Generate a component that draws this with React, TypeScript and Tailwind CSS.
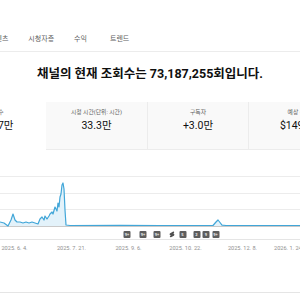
import React from 'react';

const tabs = [
    { t: '콘텐츠', ml: '-ml-[11px]' },
    { t: '시청자층', ml: 'ml-[20px]' },
    { t: '수익', ml: 'ml-[20px]' },
    { t: '트렌드', ml: 'ml-[23px]' },
];

const cards = [
    { label: '조회수', value: '158.7만', active: true },
    { label: '시청 시간(단위: 시간)', value: '33.3만' },
    { label: '구독자', value: '+3.0만' },
    { label: '예상 수익', value: '$149.52' },
];

// chart points in px (x, y) inside the 300x89 chart box
const points: [number, number][] = [
    [0, 72], [4, 73], [8, 76], [11, 70], [13, 64], [15, 70], [17, 72], [20, 72],
    [23, 73], [26, 72], [29, 73], [32, 72], [35, 73], [38, 74], [40, 69], [42, 67],
    [44, 70], [45, 66], [47, 69], [49, 66], [50, 64], [52, 62], [53, 64], [55, 57],
    [57, 61], [58, 53], [59, 57], [60, 47], [61, 44], [62, 35], [63, 33], [64, 39],
    [65, 60], [66, 75], [70, 75.5], [120, 75.3], [160, 75.5], [213, 75.5], [216, 72],
    [218, 70], [220, 72.5], [222, 75.2], [226, 75.5], [300, 75.5],
];

const markers = [
    { x: 127, t: '9+' },
    { x: 143, t: '9+' },
    { x: 157, t: '9+' },
    { x: 171.5, t: 'shorts' },
    { x: 182.5, t: '5' },
    { x: 196.5, t: '2' },
    { x: 206, t: '9' },
    { x: 215.5, t: '9+' },
];

const dates = ['2025. 6. 4.', '2025. 7. 21.', '2025. 9. 6.', '2025. 10. 22.', '2025. 12. 8.'];

const ViewsChart: React.FC = () => {
    const line = points.map(([x, y], i) => `${i ? 'L' : 'M'}${x} ${y}`).join(' ');
    const area = `${line} L300 76 L0 76 Z`;
    return (
        <div className="relative h-[89px] w-full">
            <svg width="300" height="89" viewBox="0 0 300 89" className="block">
                {[26, 43, 59].map((y) => (
                    <line key={y} x1="0" x2="300" y1={y + 0.5} y2={y + 0.5} stroke="#ececec" strokeWidth="1" />
                ))}
                <line x1="0" x2="300" y1="76.5" y2="76.5" stroke="#c9c9c9" strokeWidth="1" />
                <path d={area} fill="#e3f2fa" />
                <path d={line} fill="none" stroke="#41a6d8" strokeWidth="1.2" strokeLinejoin="round" />
            </svg>

            {/* upload markers under the chart */}
            {markers.map((m) => (
                <div
                    key={m.x}
                    className="absolute top-[81px] -translate-x-1/2"
                    style={{ left: m.x }}
                >
                    {m.t === 'shorts' ? (
                        <svg width="6" height="7" viewBox="0 0 6 7">
                            <path d="M4.2 0.6 L1.2 2.2 C0.2 2.8 0.6 4 1.5 4.1 L1.9 4.2 L1.4 4.5 C0.4 5.1 0.9 6.6 2 6.2 L4.9 4.7 C5.8 4.1 5.4 2.9 4.5 2.8 L4.1 2.7 L4.6 2.4 C5.6 1.8 5.2 0.2 4.2 0.6 Z" fill="#505050" />
                        </svg>
                    ) : (
                        <div className="w-[7px] h-[7px] rounded-[1px] bg-[#5e5e5e] flex items-center justify-center text-[4px] leading-none text-[#e8e8e8] font-bold">
                            {m.t}
                        </div>
                    )}
                </div>
            ))}
        </div>
    );
};

export default function App() {
    return (
        <div className="w-[300px] h-[300px] overflow-hidden bg-white text-[#0f0f0f] font-['Roboto','Noto_Sans_CJK_KR',sans-serif]">
            {/* Tabs */}
            <div className="h-[52px] border-b border-[#ececec] flex items-end pb-[7px]">
                <nav className="flex text-[7px] leading-[10px] text-[#606060] whitespace-nowrap">
                    {tabs.map((t) => (
                        <span key={t.t} className={t.ml}>{t.t}</span>
                    ))}
                </nav>
            </div>

            {/* Headline */}
            <div className="h-[44px] flex items-center justify-center">
                <h1 className="text-[12.5px] leading-[18px] font-bold whitespace-nowrap">
                    채널의 현재 조회수는 73,187,255회입니다.
                </h1>
            </div>

            {/* Metric cards */}
            <div className="mt-[6px] flex -ml-[55px]">
                {cards.map((c, i) => (
                    <div
                        key={c.label}
                        className={
                            c.active
                                ? 'w-[101px] h-[48px] shrink-0 flex flex-col items-center pt-[6px] bg-white'
                                : 'w-[101px] h-[48px] shrink-0 flex flex-col items-center pt-[6px] bg-[#f9f9f9] border-b border-[#ececec] ' +
                                  (i > 1 ? 'border-l' : '')
                        }
                    >
                        <span className="text-[5.8px] leading-[8px] text-[#606060] whitespace-nowrap">{c.label}</span>
                        <span className="mt-[3px] text-[10.5px] leading-[14px] whitespace-nowrap">{c.value}</span>
                    </div>
                ))}
            </div>

            <ViewsChart />

            {/* X axis dates */}
            <div className="h-[54px] border-t border-b border-[#e5e5e5] flex items-start pt-[5px] -ml-[14px] text-[5.6px] leading-[6px] text-[#909090] whitespace-nowrap">
                {dates.map((d) => (
                    <span key={d} className="w-[57px] shrink-0 text-center">{d}</span>
                ))}
                <span className="pl-[3px] shrink-0">2026. 1. 24.</span>
            </div>
        </div>
    );
}
